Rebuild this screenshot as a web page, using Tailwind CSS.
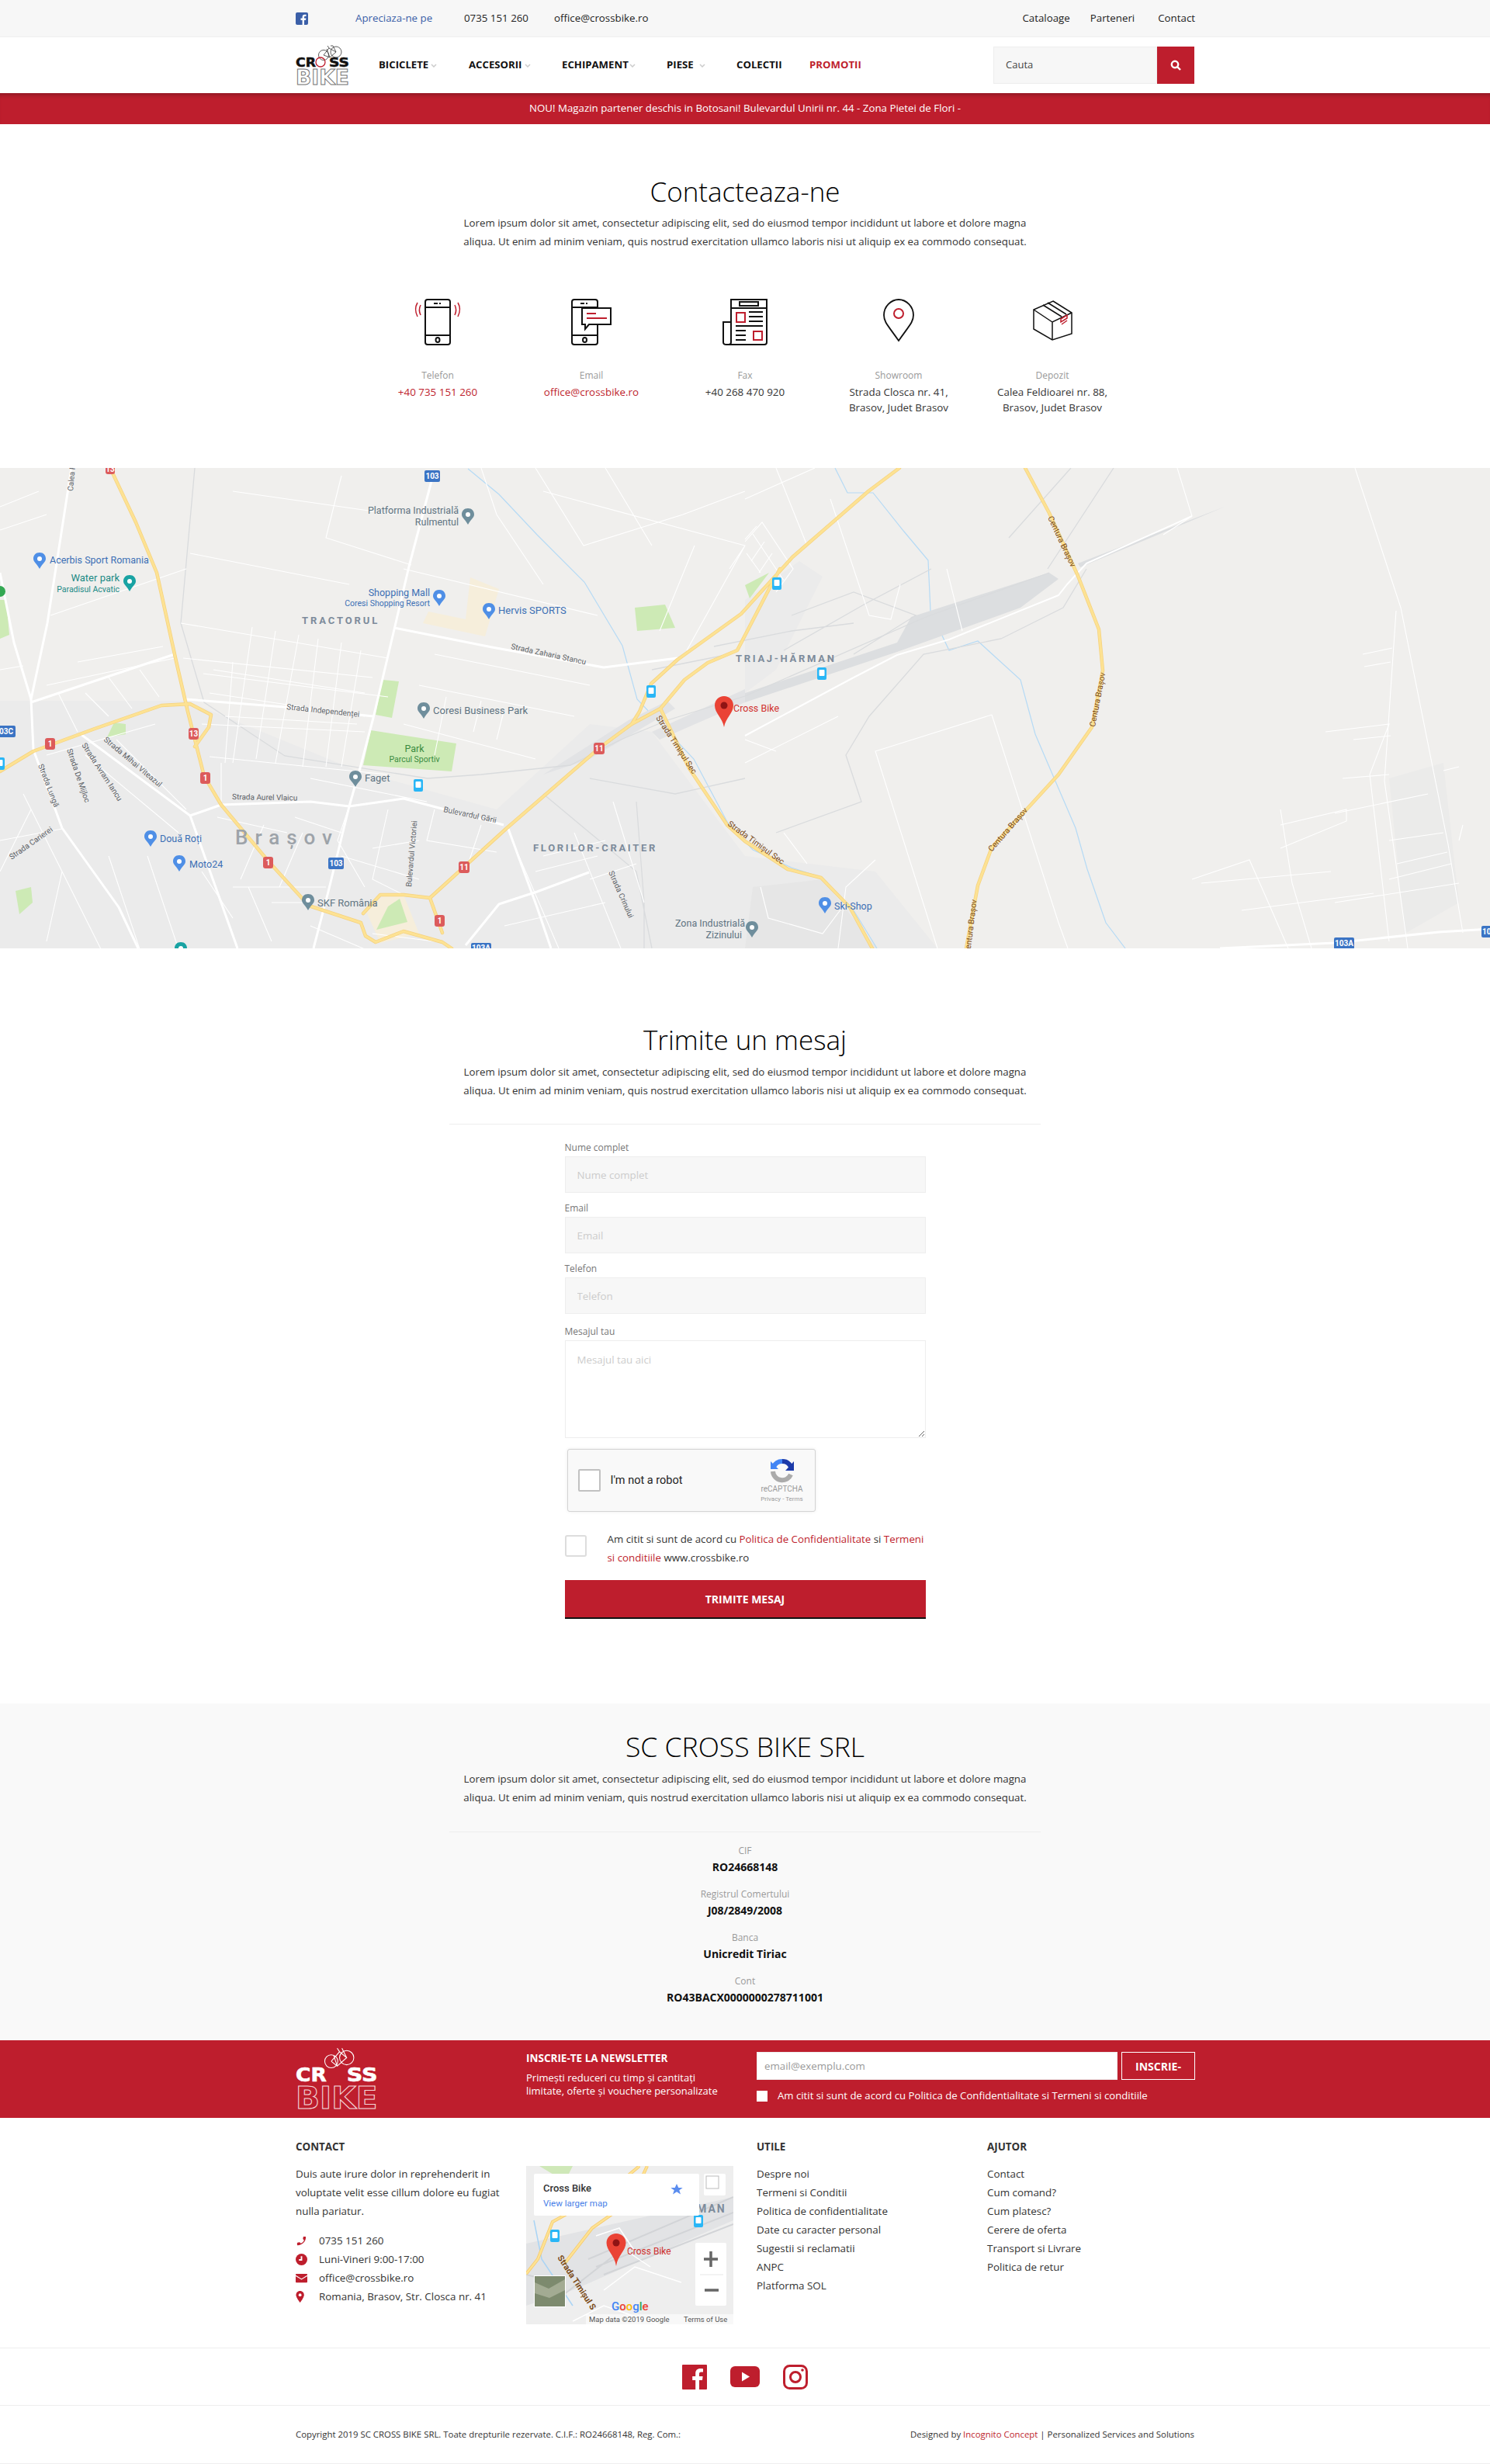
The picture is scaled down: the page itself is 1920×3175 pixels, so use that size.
<!DOCTYPE html>
<html lang="ro">
<head>
  <meta charset="UTF-8" />
  <title>Contact - Cross Bike</title>
  <script src="https://cdn.jsdelivr.net/npm/@tailwindcss/browser@4"></script>
</head>
<body class="bg-white text-[#222] text-[13px] [font-family:'Open_Sans',sans-serif]">

  <!-- TOP BAR -->
  <div class="h-12 bg-[#f7f7f7] border-b border-[#efefef]">
    <div class="w-[1160px] mx-auto h-full flex items-center text-[13.300px]">
      <svg class="ml-px w-4 h-4" viewBox="0 0 16 16"><rect width="16" height="16" rx="2" fill="#3b5fa8"/><path d="M11 16v-6h2l.4-2.400H11V6.200c0-.7.3-1.200 1.200-1.200h1.300V2.800c-.4 0-1-.1-1.800-.1-1.900 0-3.100 1.100-3.100 3.200v1.700H6.500V10h2.100v6z" fill="#fff"/></svg>
      <a class="ml-[61px] w-[140px] text-[#3b5fa8]">Apreciaza-ne pe</a>
      <span class="w-[116px]">0735 151 260</span>
      <span>office@crossbike.ro</span>
      <div class="ml-auto flex">
        <a class="mr-[26px]">Cataloage</a>
        <a class="mr-[30px]">Parteneri</a>
        <a>Contact</a>
      </div>
    </div>
  </div>

  <!-- NAV -->
  <div class="h-[72px] bg-white">
    <div class="w-[1160px] mx-auto h-full flex items-center">
      <svg class="ml-px mt-[-1px] w-[70px] h-[52px]" viewBox="0 0 70 52">
        <g fill="none" stroke="#333" stroke-width=".8">
          <circle cx="36" cy="13" r="6.500"/><circle cx="52" cy="9" r="7"/>
          <path d="M36 13l7-9 9 5-8 7-8-3M43 4l-2-3M52 9l-4-8-3 0M44 16l-4-11"/>
        </g>
        <text x="0" y="28" textLength="26" lengthAdjust="spacingAndGlyphs" font-family="DejaVu Sans" font-weight="700" font-size="16" fill="#111" stroke="#111" stroke-width=".5">CR</text>
        <circle cx="32" cy="22" r="6" fill="none" stroke="#be1e2d" stroke-width="1.300"/>
        <text x="43" y="28" textLength="26" lengthAdjust="spacingAndGlyphs" font-family="DejaVu Sans" font-weight="700" font-size="16" fill="#111" stroke="#111" stroke-width=".5">SS</text>
        <text x="0" y="51" textLength="69" lengthAdjust="spacingAndGlyphs" font-family="DejaVu Sans" font-weight="700" font-size="26" fill="#fff" stroke="#777" stroke-width="1">BIKE</text>
      </svg>
      <nav class="ml-[37px] flex items-center font-bold text-[13.200px] text-[#111]">
        <a class="w-[116px] flex items-center">BICICLETE<svg class="ml-[3px] mt-[2px] w-2 h-[5px]" viewBox="0 0 8 5" fill="none" stroke="#ccc" stroke-width="1.500"><path d="M1 1l3 3 3-3"/></svg></a>
        <a class="w-[120px] flex items-center">ACCESORII<svg class="ml-[3px] mt-[2px] w-2 h-[5px]" viewBox="0 0 8 5" fill="none" stroke="#ccc" stroke-width="1.500"><path d="M1 1l3 3 3-3"/></svg></a>
        <a class="w-[135px] flex items-center">ECHIPAMENT<svg class="ml-px mt-[2px] w-2 h-[5px]" viewBox="0 0 8 5" fill="none" stroke="#ccc" stroke-width="1.500"><path d="M1 1l3 3 3-3"/></svg></a>
        <a class="w-[90px] flex items-center">PIESE<svg class="ml-[7px] mt-[2px] w-2 h-[5px]" viewBox="0 0 8 5" fill="none" stroke="#ccc" stroke-width="1.500"><path d="M1 1l3 3 3-3"/></svg></a>
        <a class="w-[94px]">COLECTII</a>
        <a class="text-[#be1e2d]">PROMOTII</a>
      </nav>
      <div class="ml-auto mr-px flex h-12 w-[259px]">
        <input placeholder="Cauta" class="flex-1 min-w-0 bg-[#f7f7f7] border border-[#eee] pl-[15px] text-[13px] placeholder:text-[#444] outline-none" />
        <button class="w-12 bg-[#be1e2d] flex items-center justify-center">
          <svg class="w-[14px] h-[14px]" viewBox="0 0 14 14" fill="none" stroke="#fff" stroke-width="2.400"><circle cx="6" cy="6" r="4.200"/><path d="M9 9l4 4"/></svg>
        </button>
      </div>
    </div>
  </div>

  <!-- BANNER -->
  <div class="h-10 bg-[#be1e2d] shadow-[inset_0_7px_6px_-5px_rgba(0,0,0,0.3)] flex items-center justify-center text-white text-[13.300px]">
    NOU! Magazin partener deschis in Botosani! Bulevardul Unirii nr. 44 - Zona Pietei de Flori -
  </div>

  <!-- CONTACT -->
  <section class="h-[443px] pt-[67px] text-center">
    <h1 class="text-[35px] leading-10 font-light text-black">Contacteaza-ne</h1>
    <p class="mt-2 text-[13.300px] leading-6 text-[#333]">Lorem ipsum dolor sit amet, consectetur adipiscing elit, sed do eiusmod tempor incididunt ut labore et dolore magna<br>aliqua. Ut enim ad minim veniam, quis nostrud exercitation ullamco laboris nisi ut aliquip ex ea commodo consequat.</p>
    <div class="w-[990px] mx-auto mt-[62px] grid grid-cols-5 text-[13.400px] text-[#333]">
      <div>
        <svg class="mx-auto w-16 h-[60px]" viewBox="0 0 64 60" fill="none" stroke="#111" stroke-width="2">
          <rect x="16" y="1" width="32" height="58" rx="3"/><path d="M16 11h32M16 47h32M27 6h5M34 6h2"/><ellipse cx="32" cy="53" rx="2.500" ry="3"/>
          <path d="M6 5c-3 5-3 12 0 18M10 8c-2 4-2 9 0 13M58 5c3 5 3 12 0 18M54 8c2 4 2 9 0 13" stroke="#be1e2d" stroke-width="1.500"/>
        </svg>
        <div class="mt-[29px] text-[12px] leading-5 text-[#999]">Telefon</div>
        <div class="mt-px leading-5 text-[#be1e2d]">+40 735 151 260</div>
      </div>
      <div>
        <svg class="mx-auto w-16 h-[60px]" viewBox="0 0 64 60" fill="none" stroke="#111" stroke-width="2">
          <rect x="7" y="1" width="33" height="58" rx="3"/><path d="M7 11h33M7 47h33M18 6h5M25 6h2"/><ellipse cx="23.500" cy="53" rx="2.500" ry="3"/>
          <path d="M20 12h37v21H29l-5 6V33h-4z" fill="#fff"/>
          <path d="M26 19h12M26 25h26" stroke="#be1e2d" stroke-width="2"/>
        </svg>
        <div class="mt-[29px] text-[12px] leading-5 text-[#999]">Email</div>
        <div class="mt-px leading-5 text-[#be1e2d]">office@crossbike.ro</div>
      </div>
      <div>
        <svg class="mx-auto w-16 h-[60px]" viewBox="0 0 64 60" fill="none" stroke="#111" stroke-width="2">
          <path d="M14 30H4v26q0 3 4 3h49q3 0 3-3V1H14v55q0 3-3 3M14 12h46M25 4h24v5H25z"/>
          <rect x="21" y="18" width="11" height="12" stroke="#be1e2d"/><rect x="43" y="42" width="11" height="11" stroke="#be1e2d"/>
          <path d="M37 17h18M37 23h18M37 29h18M20 35h35M20 41h13M20 47h13M20 53h13"/>
        </svg>
        <div class="mt-[29px] text-[12px] leading-5 text-[#999]">Fax</div>
        <div class="mt-px leading-5">+40 268 470 920</div>
      </div>
      <div>
        <svg class="mx-auto w-16 h-[60px]" viewBox="0 0 64 60" fill="none" stroke="#111" stroke-width="1.500">
          <path d="M32 1c-10 0-19 9-19 20 0 9 5 13 19 33 14-20 19-24 19-33C51 10 42 1 32 1z" stroke-width="1.800"/>
          <circle cx="32" cy="19" r="6" stroke="#be1e2d" stroke-width="2"/>
        </svg>
        <div class="mt-[29px] text-[12px] leading-5 text-[#999]">Showroom</div>
        <div class="mt-px leading-5">Strada Closca nr. 41,<br>Brasov, Judet Brasov</div>
      </div>
      <div>
        <svg class="mx-auto w-16 h-[60px]" viewBox="0 0 64 60" fill="none" stroke="#111" stroke-width="1.500">
          <path d="M33 3l24 15v27L32 53 8 39V14z"/><path d="M8 14l24 16 25-12M32 30v23M20 8l24 15M26 5l24 15"/><path d="M43 26l8-5v4l-8 5z" fill="#fff" stroke="#be1e2d" stroke-width="1.500"/><path d="M44 33l7-5" stroke="#be1e2d"/>
        </svg>
        <div class="mt-[29px] text-[12px] leading-5 text-[#999]">Depozit</div>
        <div class="mt-px leading-5">Calea Feldioarei nr. 88,<br>Brasov, Judet Brasov</div>
      </div>
    </div>
  </section>

  <!-- MAP -->
  <div class="h-[619px] overflow-hidden bg-[#f0efed]">
    <svg class="w-[1920px] h-[619px] block" viewBox="0 0 1920 619" font-family="Roboto">
      <defs>
        <g id="pin"><path d="M0-11c-5 0-8 3.500-8 8 0 4 5 7 8 13 3-6 8-9 8-13 0-4.500-3-8-8-8z"/><circle cy="-3" r="3" fill="#fff"/></g>
        <g id="bus"><rect x="-6" y="-8" width="12" height="16" rx="2" fill="#29b6f6"/><rect x="-3.500" y="-5" width="7" height="8" rx="1" fill="#fff"/></g>
      </defs>

      <!-- urban / ground areas -->
      <path d="M0 300L240 300L460 390L640 440L760 330L840 340L960 500L1128 520L1208 619H0z" fill="#ebebeb"/>
      <path d="M970 540L1060 530L1130 619H960z" fill="#e6e6e6"/>
      <path d="M960 170L1030 120L1060 140L1000 260L960 290z" fill="#ebebeb"/>
      <path d="M1790 400L1860 380L1880 560L1810 600z" fill="#ebebea"/>
      <!-- parks / cream -->
      <path d="M606 141L643 156L625 217L545 200L552 185L600 195z" fill="#f6eedb"/>
      <path d="M472 572L495 550L520 550L540 600L490 612z" fill="#f6eedb"/>
      <g fill="#cdeab5">
        <path d="M478 338L588 355L582 391L468 383z"/>
        <path d="M493 273L514 275L505 322L484 318z"/>
        <path d="M818 180L857 176L870 206L821 210z"/>
        <path d="M147 328L162 330L162 343L138 347z"/>
        <path d="M960 151L991 135L966 168z"/>
        <path d="M500 565L515 555L525 585L485 595z"/>
        <path d="M0 170L8 170L12 215L0 220z"/>
        <path d="M20 545L40 540L42 560L25 575z"/>
      </g>

      <!-- rivers -->
      <path d="M603 1L643 34L692 86L753 147L802 229L821 298L894 375L937 456L970 492L1020 515L1060 528L1100 570L1130 619M1076 0L1092 32L1125 32L1165 82L1196 119L1199 184L1223 235L1260 223L1315 273L1334 343L1358 399L1386 464L1401 517L1425 586L1450 619" fill="none" stroke="#b5daf5" stroke-width="1.200"/>

      <!-- railway -->
      <path d="M1352 135L1174 192L1156 225L960 290L960 302L1156 237L1315 180L1364 143z" fill="#dcdee0"/>
      <path d="M840 340L960 285L960 302L850 350zM700 395L810 325L860 300L870 310L760 375z" fill="#e2e3e5"/>
      <path d="M1578 50L1389 123L1392 128z" fill="#dcdee0"/>
      <g fill="none" stroke="#d9dbdd" stroke-width="1.300">
        <path d="M1352 135L1193 192L960 294L860 325L800 350L735 383L620 395L551 400L367 371L263 302L233 200L251 0"/>
        <path d="M1400 130L1370 180L1290 220L1190 240L1120 320L1090 370L1110 430L1000 470"/>
        <path d="M1020 190L1100 160L1180 190L1100 240M920 230L1020 210L1100 200M840 260L940 240M700 420L820 520L840 619M760 400L870 420L960 400M820 430L830 560L830 619M1300 90L1380 0M1350 130L1435 0M1200 130L1115 175L1010 235"/>
      </g>

      <!-- thin roads -->
      <g fill="none" stroke="#fff" stroke-width="1.100">
        <path d="M1746 0L1805 180L1866 485L1885 599M1799 184L1784 403L1814 619M1517 0L1536 62L1499 86M1278 318L1128 365L1208 619M1278 318L1364 586L1376 619"/>
        <path d="M1744 350L1792 345M1756 240L1794 232M1758 256L1792 250M1708 340L1790 330L1765 395L1775 480L1790 610M1730 400L1790 395M1720 445L1840 420M1650 440L1665 535L1690 619M1650 460L1735 440L1735 455L1650 490M1536 530L1610 505L1630 550L1660 619M1548 535L1715 520M1600 570L1770 548M1720 560L1880 535M1790 480L1860 470M1800 510L1865 495M1790 530L1870 510M1860 390L1880 385M1885 460L1880 480"/>
        <path d="M1070 40L1120 190L1148 195L1160 150M1220 130L1240 210M960 380L1080 320M960 350L1000 365M1128 505L1090 540L1080 619M1010 470L1040 510M980 540L990 580L1060 600L1090 560"/>
        <path d="M690 0L752 100L880 60L960 30M620 0L640 60L700 150M780 0L840 100M700 30L960 100L940 130M960 100L885 235M850 210L895 100M1000 0L1040 100M960 40L1050 0"/>
        <path d="M960 95L982 70L1022 130L1000 160M970 85L1010 145M962 110L980 135M975 75L960 92M985 95L968 120M995 110L978 135"/>
        <path d="M233 200L500 245M236 245L480 270M262 265L500 295M270 290L470 320M260 330L470 340M270 372L500 395M285 380L285 430M300 250L290 380M325 205L300 380M355 210L330 375M385 215L355 380M410 220L390 385M440 225L420 385M465 235L440 385M275 260L470 290M290 320L460 330"/>
        <path d="M245 110L450 150M300 30L510 60M440 10L420 90L530 125M520 130L770 190M560 240L760 280M540 280L740 320M520 330L690 375M575 295L560 370M620 300L610 340M650 310L640 350M400 400L550 430M450 436L435 480L470 540M500 440L480 530L520 550M560 440L550 480L640 495M620 460L600 520M540 480L480 490M380 450L440 470M280 450L370 470M340 460L310 530M390 470L360 540M300 540L420 540M440 500L540 530M480 600L560 610M0 80L60 60M0 50L50 30M0 260L30 255M65 190L240 130M100 250L210 230M60 280L225 245M75 290L100 340M110 290L140 320M140 270L170 310M180 260L205 295M60 370L200 330M110 370L230 470M150 350L240 440M30 420L130 620M0 480L80 465M40 440L0 520M80 520L60 610M140 500L180 620M190 500L230 620M260 520L300 580M320 540L350 610M350 560L400 560M400 590L470 620M660 480L720 619M740 470L800 619M700 500L780 480M690 520L770 500M760 530L820 510M650 590L780 560M790 430L830 560"/>
      </g>

      <!-- main white roads -->
      <g fill="none" stroke="#fff" stroke-width="3" stroke-linejoin="round">
        <path d="M557 13L527 127L508 208L481 322L465 383L450 436L423 546L404 619"/>
        <path d="M239 298L367 308L481 320M508 206L634 231L778 257L873 245"/>
        <path d="M245 448L285 434L400 430L450 436L520 426L649 460"/>
        <path d="M92 0L61 200L40 298L43 363L80 464L153 566L178 619M0 135L18 225L40 298M40 302L225 240"/>
        <path d="M104 343L245 448L306 619M655 465L692 566L710 619M600 615L643 562L692 546L759 521M1572 619L1719 612L1854 598L1920 594"/>
        <path d="M1536 62L1400 123L1375 150L1364 164L1223 221L1156 241L1100 270L960 345" stroke-width="2"/>
      </g>

      <!-- yellow roads -->
      <g fill="none" stroke-linejoin="round" stroke-linecap="round">
        <g stroke="#f5d27f" stroke-width="4.500">
          <path d="M142 0L175 70L202 135L227 249L242 314L263 397L285 434L346 507L398 564L465 586M0 391L43 365L122 336L208 306L245 304L272 318L269 334L251 359M465 586L471 603L484 611L520 597L570 611L582 619M468 574L490 550L520 550L554 554L570 599M554 554L597 515L652 465L772 361L814 330L851 310M814 330L824 314L839 278L873 247L955 188L1021 115L1119 30L1159 0M851 310L882 273L912 251L950 235L991 156L1005 130M851 310L888 387L937 460L960 481L1015 517L1058 528L1095 566L1124 619M1321 0L1352 58L1389 139L1416 208L1421 261L1407 334L1364 395L1278 489L1260 538L1245 619"/>
        </g>
        <g stroke="#fde293" stroke-width="3">
          <path d="M142 0L175 70L202 135L227 249L242 314L263 397L285 434L346 507L398 564L465 586M0 391L43 365L122 336L208 306L245 304L272 318L269 334L251 359M465 586L471 603L484 611L520 597L570 611L582 619M468 574L490 550L520 550L554 554L570 599M554 554L597 515L652 465L772 361L814 330L851 310M814 330L824 314L839 278L873 247L955 188L1021 115L1119 30L1159 0M851 310L882 273L912 251L950 235L991 156L1005 130M851 310L888 387L937 460L960 481L1015 517L1058 528L1095 566L1124 619M1321 0L1352 58L1389 139L1416 208L1421 261L1407 334L1364 395L1278 489L1260 538L1245 619"/>
        </g>
      </g>

      <!-- road shields -->
      <g font-size="10" font-weight="700" fill="#fff" text-anchor="middle">
        <rect x="136" y="-6" width="12" height="14" rx="3" fill="#dc5b5b"/><text x="142" y="5">13</text>
        <rect x="243" y="335" width="13" height="15" rx="3" fill="#dc5b5b"/><text x="249.500" y="346">13</text>
        <rect x="58" y="348" width="13" height="15" rx="3" fill="#dc5b5b"/><text x="64.500" y="359">1</text>
        <rect x="258" y="392" width="13" height="15" rx="3" fill="#dc5b5b"/><text x="264.500" y="403">1</text>
        <rect x="339" y="501" width="13" height="15" rx="3" fill="#dc5b5b"/><text x="345.500" y="512">1</text>
        <rect x="560" y="576" width="13" height="15" rx="3" fill="#dc5b5b"/><text x="566.500" y="587">1</text>
        <rect x="765" y="354" width="14" height="15" rx="3" fill="#dc5b5b"/><text x="772" y="365">11</text>
        <rect x="591" y="507" width="14" height="15" rx="3" fill="#dc5b5b"/><text x="598" y="518">11</text>
        <rect x="547" y="3" width="20" height="15" rx="2" fill="#3b74c4"/><text x="557" y="14">103</text>
        <rect x="423" y="502" width="20" height="15" rx="2" fill="#3b74c4"/><text x="433" y="513">103</text>
        <rect x="-4" y="332" width="24" height="15" rx="2" fill="#3b74c4"/><text x="8" y="343">03C</text>
        <rect x="607" y="612" width="26" height="15" rx="2" fill="#3b74c4"/><text x="620" y="622">103A</text>
        <rect x="1719" y="605" width="26" height="15" rx="2" fill="#3b74c4"/><text x="1732" y="616">103A</text>
        <rect x="1909" y="590" width="26" height="15" rx="2" fill="#3b74c4"/><text x="1922" y="601">103A</text>
      </g>
      <use href="#bus" x="839" y="288"/><use href="#bus" x="539" y="409"/><use href="#bus" x="1001" y="149"/><use href="#bus" x="1059" y="265"/><use href="#bus" x="0" y="381"/>

      <!-- markers -->
      <g fill="#4f8fe6">
        <use href="#pin" x="51" y="120"/><use href="#pin" x="566" y="168"/><use href="#pin" x="630" y="185"/><use href="#pin" x="194" y="478"/><use href="#pin" x="231" y="510"/><use href="#pin" x="1063" y="564"/>
      </g>
      <g fill="#6f8e9c">
        <use href="#pin" x="603" y="63"/><use href="#pin" x="546" y="313"/><use href="#pin" x="458" y="401"/><use href="#pin" x="397" y="560"/><use href="#pin" x="969" y="595"/>
      </g>
      <use href="#pin" x="167" y="149" fill="#19a3a3"/>
      <use href="#pin" x="233" y="622" fill="#19a3a3"/>
      <circle cx="0" cy="159" r="7" fill="#34a853"/>

      <!-- place labels -->
      <g font-size="12.500" fill="#5f7482">
        <text x="591" y="59" text-anchor="end">Platforma Industrială</text>
        <text x="591" y="74" text-anchor="end">Rulmentul</text>
        <text x="558" y="317" font-size="13">Coresi Business Park</text>
        <text x="470" y="404" font-size="13">Faget</text>
        <text x="409" y="565" font-size="13">SKF România</text>
        <text x="960" y="591" text-anchor="end">Zona Industrială</text>
        <text x="956" y="606" text-anchor="end">Zizinului</text>
      </g>
      <g font-size="12.500" fill="#3c6fb5">
        <text x="64" y="123">Acerbis Sport Romania</text>
        <text x="554" y="165" text-anchor="end">Shopping Mall</text>
        <text x="554" y="178" text-anchor="end" font-size="10.500">Coresi Shopping Resort</text>
        <text x="642" y="188" font-size="13">Hervis SPORTS</text>
        <text x="206" y="482">Două Roți</text>
        <text x="244" y="515">Moto24</text>
        <text x="1075" y="569">Ski-Shop</text>
      </g>
      <g fill="#1b8a86" text-anchor="end">
        <text x="154" y="146" font-size="13">Water park</text>
        <text x="154" y="160" font-size="10.500">Paradisul Acvatic</text>
      </g>
      <g fill="#3a8a3f" text-anchor="middle">
        <text x="534" y="366" font-size="12.500">Park</text>
        <text x="534" y="379" font-size="10.500">Parcul Sportiv</text>
      </g>
      <g fill="#7d8b9b" font-weight="700" font-size="13">
        <text x="389" y="201" letter-spacing="2.900">TRACTORUL</text>
        <text x="687" y="494" letter-spacing="2.700">FLORILOR-CRAITER</text>
        <text x="948" y="250" letter-spacing="2.700">TRIAJ-HĂRMAN</text>
      </g>
      <text x="303" y="485" font-size="26" fill="#9da3a9" letter-spacing="9" font-weight="500">Brașov</text>
      <text x="945" y="314" font-size="12.500" fill="#d0312d">Cross Bike</text>

      <!-- street labels -->
      <g font-size="10" fill="#5c6166">
        <text transform="translate(658 233) rotate(12)">Strada Zaharia Stancu</text>
        <text transform="translate(369 311) rotate(6)">Strada Independenței</text>
        <text transform="translate(299 427) rotate(1)">Strada Aurel Vlaicu</text>
        <text transform="translate(571 443) rotate(12)">Bulevardul Gării</text>
        <text transform="translate(530 540) rotate(-85)">Bulevardul Victoriei</text>
        <text transform="translate(49 383) rotate(69)">Strada Lungă</text>
        <text transform="translate(86 363) rotate(71)">Strada De Mijloc</text>
        <text transform="translate(105 357) rotate(57)">Strada Avram Iancu</text>
        <text transform="translate(133 351) rotate(40)">Strada Mihai Viteazul</text>
        <text transform="translate(15 505) rotate(-35)">Strada Carierei</text>
        <text transform="translate(784 521) rotate(66)">Strada Crinului</text>
        <text transform="translate(94 30) rotate(-85)">Calea F</text>
      </g>
      <g font-size="10.500" fill="#7a4a17">
        <text transform="translate(845 322) rotate(57)">Strada Timișul Sec</text>
        <text transform="translate(937 460) rotate(36)">Strada Timișul Sec</text>
        <text transform="translate(1350 64) rotate(65)">Centura Brașov</text>
        <text transform="translate(1411 334) rotate(-79)">Centura Brașov</text>
        <text transform="translate(1278 495) rotate(-49)">Centura Brașov</text>
        <text transform="translate(1250 627) rotate(-83)">Centura Brașov</text>
      </g>

      <!-- main pin -->
      <path d="M933 334c-2-12-12-18-12-28 0-7 5-12 12-12s12 5 12 12c0 10-10 16-12 28z" fill="#ea4335"/>
      <circle cx="933" cy="306" r="4.500" fill="#8f1414"/>
    </svg>
  </div>

  <!-- MESSAGE FORM -->
  <section class="h-[973px] pt-[98px] text-center">
    <h2 class="text-[35px] leading-10 font-light text-black">Trimite un mesaj</h2>
    <p class="mt-[9px] text-[13.300px] leading-6 text-[#333]">Lorem ipsum dolor sit amet, consectetur adipiscing elit, sed do eiusmod tempor incididunt ut labore et dolore magna<br>aliqua. Ut enim ad minim veniam, quis nostrud exercitation ullamco laboris nisi ut aliquip ex ea commodo consequat.</p>
    <hr class="w-[762px] mx-auto mt-[31px] border-[#eee]">
    <form class="w-[465px] mx-auto mt-[23px] text-left">
      <label class="block text-[12px] leading-[14px] text-[#777]">Nume complet</label>
      <input placeholder="Nume complet" class="mt-1 block w-full h-[47px] bg-[#f7f7f7] border border-[#eee] pl-[15px] text-[13.300px] placeholder:text-[#ccc]" />
      <label class="mt-[13px] block text-[12px] leading-[14px] text-[#777]">Email</label>
      <input placeholder="Email" class="mt-1 block w-full h-[47px] bg-[#f7f7f7] border border-[#eee] pl-[15px] text-[13.300px] placeholder:text-[#ccc]" />
      <label class="mt-[13px] block text-[12px] leading-[14px] text-[#777]">Telefon</label>
      <input placeholder="Telefon" class="mt-1 block w-full h-[47px] bg-[#f7f7f7] border border-[#eee] pl-[15px] text-[13.300px] placeholder:text-[#ccc]" />
      <label class="mt-4 block text-[12px] leading-[14px] text-[#777]">Mesajul tau</label>
      <textarea placeholder="Mesajul tau aici" class="mt-1 block w-full h-[126px] border border-[#eee] pl-[15px] pt-[15px] text-[13.300px] placeholder:text-[#ccc]"></textarea>

      <!-- recaptcha -->
      <div class="ml-[3px] mt-[14px] w-[320px] h-[81px] bg-[#f9f9f9] border border-[#d3d3d3] rounded-[3px] shadow-[0_0_4px_rgba(0,0,0,0.08)] flex items-center [font-family:Roboto,sans-serif]">
        <span class="ml-[13px] w-[29px] h-[29px] bg-white border-2 border-[#c1c1c1] rounded-[2px]"></span>
        <span class="ml-[13px] text-[14.500px] text-[#222]">I'm not a robot</span>
        <div class="ml-auto mr-[12px] w-[60px] flex flex-col items-center">
          <svg class="w-8 h-8" viewBox="0 0 32 32" fill="none" stroke-width="6">
            <path d="M16 4a12 12 0 0 1 11 7" stroke="#1c3aa9"/><path d="M16 4A12 12 0 0 0 5 11" stroke="#4285f4"/><path d="M4 17a12 12 0 0 0 23 4" stroke="#ababab"/>
            <path d="M31 4v12H20z" fill="#1c3aa9" stroke="none"/><path d="M1 4v10h10z" fill="#4285f4" stroke="none"/>
          </svg>
          <span class="mt-[2px] text-[10px] leading-3 text-[#999]">reCAPTCHA</span>
          <span class="mt-[2px] text-[8px] leading-[10px] text-[#999] whitespace-nowrap">Privacy - Terms</span>
        </div>
      </div>

      <div class="mt-[23px] flex items-start">
        <span class="mt-[7px] w-7 h-7 shrink-0 border-2 border-[#ddd] rounded-[3px]"></span>
        <p class="ml-[27px] text-[13.300px] leading-6 text-[#333]">Am citit si sunt de acord cu <a class="text-[#be1e2d]">Politica de Confidentialitate</a> si <a class="text-[#be1e2d]">Termeni si conditiile</a> www.crossbike.ro</p>
      </div>
      <button type="button" class="mt-[17px] block w-full h-[50px] bg-[#be1e2d] border-b-2 border-[#111] text-white font-bold text-[14px]">TRIMITE MESAJ</button>
    </form>
  </section>

  <!-- COMPANY -->
  <section class="h-[434px] bg-[#f9f9f9] pt-[35px] text-center">
    <h2 class="text-[35.500px] leading-10 font-light text-black">SC CROSS BIKE SRL</h2>
    <p class="mt-[10px] text-[13.300px] leading-6 text-[#333]">Lorem ipsum dolor sit amet, consectetur adipiscing elit, sed do eiusmod tempor incididunt ut labore et dolore magna<br>aliqua. Ut enim ad minim veniam, quis nostrud exercitation ullamco laboris nisi ut aliquip ex ea commodo consequat.</p>
    <hr class="w-[762px] mx-auto mt-[32px] border-[#eee]">
    <div class="mt-[14px] text-[12px] leading-5 text-[#999]">CIF</div>
    <div class="mt-px text-[14px] leading-5 font-bold text-[#111]">RO24668148</div>
    <div class="mt-[15px] text-[12px] leading-5 text-[#999]">Registrul Comertului</div>
    <div class="mt-px text-[14px] leading-5 font-bold text-[#111]">J08/2849/2008</div>
    <div class="mt-[15px] text-[12px] leading-5 text-[#999]">Banca</div>
    <div class="mt-px text-[14px] leading-5 font-bold text-[#111]">Unicredit Tiriac</div>
    <div class="mt-[15px] text-[12px] leading-5 text-[#999]">Cont</div>
    <div class="mt-px text-[14px] leading-5 font-bold text-[#111]">RO43BACX0000000278711001</div>
  </section>

  <!-- NEWSLETTER -->
  <div class="h-[100px] bg-[#be1e2d] text-white">
    <div class="w-[1160px] mx-auto h-full grid grid-cols-[297px_297px_1fr]">
      <svg class="ml-px mt-[10px] w-[107px] h-[80px]" viewBox="0 0 70 52">
        <g fill="none" stroke="#fff" stroke-width=".7">
          <circle cx="30" cy="11" r="5.500"/><circle cx="43" cy="8" r="6"/>
          <path d="M30 11l7-8 6 5-8 7-5-4M37 3l-2-3M43 8l-4-8M35 15l-3-9"/>
        </g>
        <text x="0" y="28" textLength="26" lengthAdjust="spacingAndGlyphs" font-family="DejaVu Sans" font-weight="700" font-size="16" fill="#fff" stroke="#fff" stroke-width=".4">CR</text>
        <text x="43" y="28" textLength="26" lengthAdjust="spacingAndGlyphs" font-family="DejaVu Sans" font-weight="700" font-size="16" fill="#fff" stroke="#fff" stroke-width=".4">SS</text>
        <text x="0" y="51" textLength="69" lengthAdjust="spacingAndGlyphs" font-family="DejaVu Sans" font-weight="700" font-size="26" fill="#be1e2d" stroke="#f3d6d9" stroke-width=".7">BIKE</text>
      </svg>
      <div class="pt-[15px] pl-px">
        <div class="font-bold text-[13.500px] leading-4">INSCRIE-TE LA NEWSLETTER</div>
        <p class="mt-[9px] text-[13px] leading-[17px]">Primești reduceri cu timp și cantitați<br>limitate, oferte și vouchere personalizate</p>
      </div>
      <div class="pt-[15px] pl-px">
        <div class="flex">
          <input placeholder="email@exemplu.com" class="w-[465px] h-9 bg-white pl-[9px] text-[13.300px] text-[#333] placeholder:text-[#999] border border-[#eee]" />
          <button class="ml-[5px] w-[95px] h-9 border border-white font-bold text-[14px]">INSCRIE-</button>
        </div>
        <div class="mt-[11px] flex items-center">
          <span class="w-[14px] h-[14px] bg-white"></span>
          <span class="ml-[13px] text-[13.200px]">Am citit si sunt de acord cu Politica de Confidentialitate si Termeni si conditiile</span>
        </div>
      </div>
    </div>
  </div>

  <!-- FOOTER -->
  <footer class="h-[296px]">
    <div class="w-[1160px] mx-auto grid grid-cols-[297px_297px_297px_269px] pt-[27px] text-[13.400px] text-[#333]">
      <div class="pl-px">
        <h4 class="font-bold leading-5 text-[#333]">CONTACT</h4>
        <p class="mt-[13px] leading-6 w-[270px]">Duis aute irure dolor in reprehenderit in voluptate velit esse cillum dolore eu fugiat nulla pariatur.</p>
        <ul class="mt-[14px] leading-6">
          <li class="flex items-center h-6">
            <svg class="w-[15px] h-[15px] mr-[15px]" viewBox="0 0 24 24" fill="#be1e2d"><path transform="translate(24 0) scale(-1 1)" d="M6.620 10.790c1.440 2.830 3.760 5.140 6.590 6.590l2.200-2.200c.27-.27.67-.36 1.020-.24 1.120.37 2.330.57 3.570.57.55 0 1 .45 1 1V20c0 .55-.45 1-1 1-9.390 0-17-7.610-17-17 0-.55.45-1 1-1h3.500c.55 0 1 .45 1 1 0 1.250.2 2.450.57 3.570.11.35.03.74-.25 1.020l-2.200 2.200z"/></svg>
            0735 151 260
          </li>
          <li class="flex items-center h-6">
            <svg class="w-[15px] h-[15px] mr-[15px]" viewBox="0 0 16 16"><circle cx="8" cy="8" r="8" fill="#be1e2d"/><path d="M8 3.500V8.500H4.500" fill="none" stroke="#fff" stroke-width="2"/></svg>
            Luni-Vineri 9:00-17:00
          </li>
          <li class="flex items-center h-6">
            <svg class="w-[15px] h-[15px] mr-[15px]" viewBox="0 0 16 16"><rect y="2" width="16" height="12" rx="1" fill="#be1e2d"/><path d="M0 4.500l8 5 8-5" fill="none" stroke="#fff" stroke-width="1.300"/></svg>
            office@crossbike.ro
          </li>
          <li class="flex items-center h-6">
            <svg class="w-[15px] h-[15px] mr-[15px]" viewBox="0 0 16 16"><path d="M6 0C2.700 0 .5 2.500.5 5.500.5 9 6 16 6 16s5.500-7 5.500-10.500C11.500 2.500 9.300 0 6 0z" fill="#be1e2d"/><circle cx="6" cy="5.500" r="2" fill="#fff"/></svg>
            Romania, Brasov, Str. Closca nr. 41
          </li>
        </ul>
      </div>

      <!-- mini map -->
      <div class="pt-[35px] pl-px">
        <svg class="block w-[267px] h-[204px] overflow-hidden" viewBox="0 0 267 204" font-family="Roboto">
          <rect width="267" height="204" fill="#eeeeee"/>
          <path d="M17 0L60 0L50 20z" fill="#cfe8b8"/>
          <path d="M0 100L267 40V70L60 160L0 180z" fill="#e2e3e5"/>
          <path d="M267 40L80 120M267 60L90 130M267 75L100 140M120 110L30 180M0 140L40 150" fill="none" stroke="#d2d4d7" stroke-width="2"/>
          <path d="M100 160L140 130L200 150M60 200L100 180L170 204M130 110L160 130M90 90L120 80L140 110" fill="none" stroke="#fff" stroke-width="1.500"/>
          <path d="M10 70L20 120L60 180" fill="none" stroke="#a9d4f5" stroke-width="1.500"/>
          <path d="M146 0L110 30L34 72L15 120L0 139M156 0L135 45L85 80L50 125" fill="none" stroke="#f6c86a" stroke-width="4"/>
          <path d="M146 0L110 30L34 72L15 120L0 139M156 0L135 45L85 80L50 125" fill="none" stroke="#fde293" stroke-width="2.500"/>
          <use href="#bus" x="37" y="90"/>
          <use href="#bus" x="222" y="71"/>
          <text x="220" y="60" font-size="14" font-weight="700" fill="#7d8b9b" letter-spacing="2">MAN</text>
          <text transform="translate(40 118) rotate(57)" font-size="11" font-weight="700" fill="#7a4a17">Strada Timișul S</text>
          <path d="M116 129c-2-14-12.500-20-12.500-30 0-7 5.500-12 12.500-12s12.500 5 12.500 12c0 10-10.500 16-12.500 30z" fill="#ea4335"/>
          <circle cx="116" cy="99" r="4.500" fill="#8f1414"/>
          <text x="130" y="114" font-size="12" fill="#d0312d">Cross Bike</text>
          <rect x="10" y="10" width="213" height="54" rx="2" fill="#fff"/>
          <text x="22" y="33" font-size="13" font-weight="500" fill="#333">Cross Bike</text>
          <text x="22" y="52" font-size="11.500" fill="#4a7fe8">View larger map</text>
          <path d="M194 23l2.300 5h5.400l-4.400 3.300 1.700 5.300-5-3.300-5 3.300 1.700-5.300-4.400-3.300h5.400z" fill="#5b8def"/>
          <rect x="229" y="10" width="28" height="28" rx="2" fill="#fff"/>
          <rect x="232" y="13" width="16" height="16" fill="none" stroke="#bbb"/>
          <rect x="218" y="99" width="40" height="81" rx="2" fill="#fff"/>
          <path d="M238 110v20M229 120h18" stroke="#666" stroke-width="3.500"/>
          <path d="M224 140h30" stroke="#e6e6e6"/>
          <path d="M230 160h18" stroke="#666" stroke-width="3.500"/>
          <rect x="10" y="141" width="41" height="41" fill="#fff"/>
          <rect x="11" y="142" width="39" height="39" fill="#7d8a6e"/>
          <path d="M11 150l18 8 21-12v14l-20 10-19-6zM20 142l10 10M30 165l15 16" fill="#a3ab93"/>
          <text x="110" y="186" font-size="15" font-weight="500"><tspan fill="#4285f4">G</tspan><tspan fill="#ea4335">o</tspan><tspan fill="#fbbc05">o</tspan><tspan fill="#4285f4">g</tspan><tspan fill="#34a853">l</tspan><tspan fill="#ea4335">e</tspan></text>
          <rect x="77" y="191" width="190" height="13" fill="#fff" fill-opacity=".6"/>
          <text x="81" y="201" font-size="9.500" fill="#555">Map data ©2019 Google</text>
          <text x="203" y="201" font-size="9.500" fill="#555">Terms of Use</text>
        </svg>
      </div>

      <div>
        <h4 class="pl-px font-bold leading-5 text-[#333]">UTILE</h4>
        <ul class="mt-[13px] pl-px leading-6">
          <li>Despre noi</li>
          <li>Termeni si Conditii</li>
          <li>Politica de confidentialitate</li>
          <li>Date cu caracter personal</li>
          <li>Sugestii si reclamatii</li>
          <li>ANPC</li>
          <li>Platforma SOL</li>
        </ul>
      </div>
      <div>
        <h4 class="pl-px font-bold leading-5 text-[#333]">AJUTOR</h4>
        <ul class="mt-[13px] pl-px leading-6">
          <li>Contact</li>
          <li>Cum comand?</li>
          <li>Cum platesc?</li>
          <li>Cerere de oferta</li>
          <li>Transport si Livrare</li>
          <li>Politica de retur</li>
        </ul>
      </div>
    </div>
  </footer>

  <!-- SOCIAL -->
  <div class="h-[74px] border-t border-[#eee] flex items-center justify-center gap-[30px]">
    <svg class="w-8 h-8" viewBox="0 0 32 32"><rect width="32" height="32" rx="1" fill="#be1e2d"/><path d="M22 32V20h4l.6-5H22v-3c0-1.500.5-2.400 2.400-2.400H27V5.200C26.500 5.100 25 5 23.300 5c-3.600 0-6.100 2.200-6.100 6.300V15h-4v5h4v12z" fill="#fff"/></svg>
    <svg class="w-[38px] h-[27px]" viewBox="0 0 38 27"><rect width="38" height="27" rx="6" fill="#be1e2d"/><path d="M15 7.500v12l10-6z" fill="#fff"/></svg>
    <svg class="w-8 h-8" viewBox="0 0 32 32" fill="none" stroke="#be1e2d" stroke-width="3"><rect x="1.500" y="1.500" width="29" height="29" rx="7"/><circle cx="16" cy="16" r="6.500"/><circle cx="25" cy="7" r="1.800" fill="#be1e2d" stroke="none"/></svg>
  </div>

  <!-- COPYRIGHT -->
  <div class="h-[76px] border-y border-[#eee]">
    <div class="w-[1160px] mx-auto h-full flex items-center justify-between text-[11.400px] text-[#333]">
      <span class="pl-px">Copyright 2019 SC CROSS BIKE SRL. Toate drepturile rezervate. C.I.F.: RO24668148, Reg. Com.:</span>
      <span class="pr-px">Designed by <a class="text-[#be1e2d]">Incognito Concept</a> | Personalized Services and Solutions</span>
    </div>
  </div>
</body>
</html>
